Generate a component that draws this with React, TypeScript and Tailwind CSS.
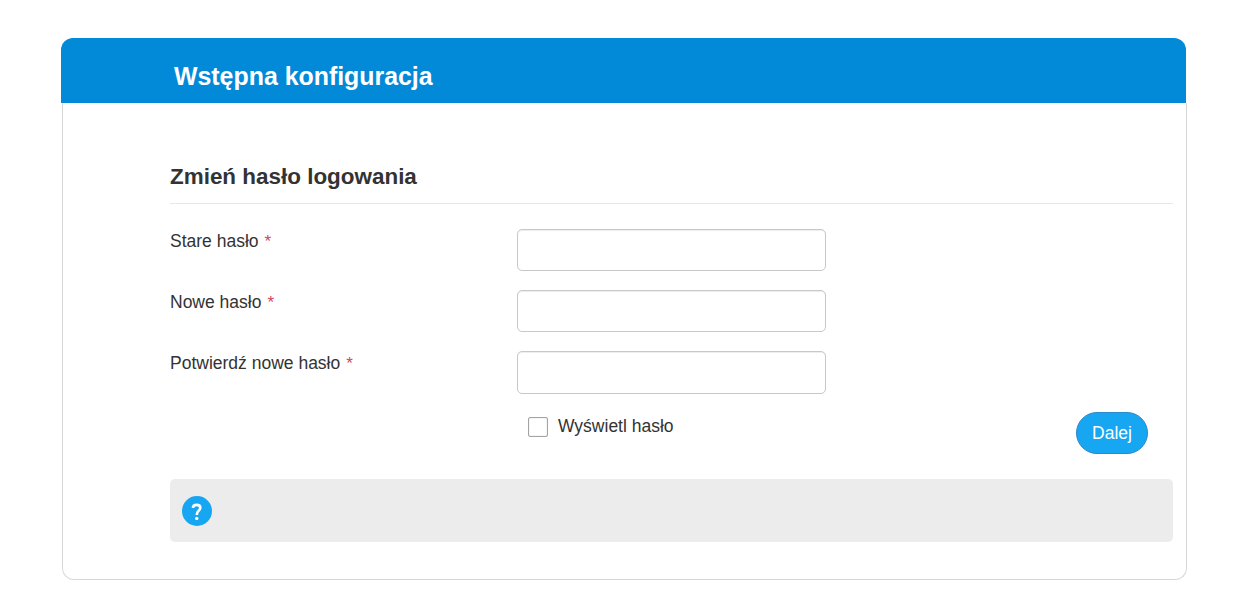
import React, { useState } from 'react';

const fields = [
  { id: 'old-password', label: 'Stare hasło', height: 'h-[42px]' },
  { id: 'new-password', label: 'Nowe hasło', height: 'h-[42px]' },
  { id: 'confirm-password', label: 'Potwierdź nowe hasło', height: 'h-[43px]' },
];

export default function App() {
  const [values, setValues] = useState<Record<string, string>>({});
  const [showPassword, setShowPassword] = useState(false);

  return (
    <div className="h-[599px] bg-white pt-[38px] pl-[61px] text-[#333] font-['Liberation_Sans',Arial,sans-serif]">
      <div className="w-[1126px]">
        {/* Header */}
        <div className="w-[1125px] h-[65px] bg-[#028ad9] rounded-t-[12px] pl-[113px] pt-[20px]">
          <h1 className="text-white font-bold text-[24.9px] leading-[36px]">Wstępna konfiguracja</h1>
        </div>

        <form
          onSubmit={(e) => e.preventDefault()}
          className="ml-px h-[477px] border border-t-0 border-[#d8d8d8] rounded-b-[12px] pl-[107px] pr-[13px] pt-[58px]"
        >
          <h2 className="h-[43px] border-b border-[#e8e8e8] text-[22.45px] leading-[31px] font-bold">
            Zmień hasło logowania
          </h2>

          {/* Password fields */}
          <div className="pt-[25px] text-[17.5px]">
            {fields.map((field) => (
              <div key={field.id} className="flex h-[61px]">
                <label htmlFor={field.id} className="w-[347px] leading-[24px]">
                  {field.label}
                  <span className="ml-[6px] text-[17px] text-[#d9435f]">*</span>
                </label>
                <input
                  id={field.id}
                  type={showPassword ? 'text' : 'password'}
                  value={values[field.id] ?? ''}
                  onChange={(e) => setValues({ ...values, [field.id]: e.target.value })}
                  className={`w-[309px] ${field.height} px-3 bg-white border border-[#c8c8c8] rounded-[5px] shadow-[inset_0_1px_1px_rgba(0,0,0,0.075)] outline-none`}
                />
              </div>
            ))}
          </div>

          {/* Show password + submit */}
          <div className="flex justify-between h-[67px] pl-[358px] pr-[25px] text-[17.5px]">
            <label className="flex items-start gap-[10px] leading-[28px]">
              <input
                type="checkbox"
                checked={showPassword}
                onChange={(e) => setShowPassword(e.target.checked)}
                className="appearance-none mt-[5px] size-5 bg-white border border-[#a4a4a8] rounded-[2px] shadow-[inset_0_0_1px_#a4a4a8] checked:bg-[#17a6f1]"
              />
              Wyświetl hasło
            </label>
            <button
              type="submit"
              className="w-[72px] h-[42px] bg-[#17a6f1] border border-[#2f88c8] rounded-full text-white"
            >
              Dalej
            </button>
          </div>

          {/* Help bar */}
          <div className="flex items-center h-[63px] pl-3 bg-[#ececec] rounded-[5px]">
            <svg viewBox="0 0 30 30" className="size-[30px]">
              <circle cx="15" cy="15" r="15" fill="#17a6f1" />
              <path
                d="M10.900 11.900C11 9.800 12.500 8.900 14.700 8.900c2.200 0 3.600 1.100 3.600 2.900 0 1.500-.9 2.300-1.900 3.200-1.100.9-1.600 1.700-1.600 4"
                fill="none"
                stroke="#fff"
                strokeWidth="2.600"
              />
              <circle cx="14.700" cy="22.400" r="1.700" fill="#fff" />
            </svg>
          </div>
        </form>
      </div>
    </div>
  );
}
